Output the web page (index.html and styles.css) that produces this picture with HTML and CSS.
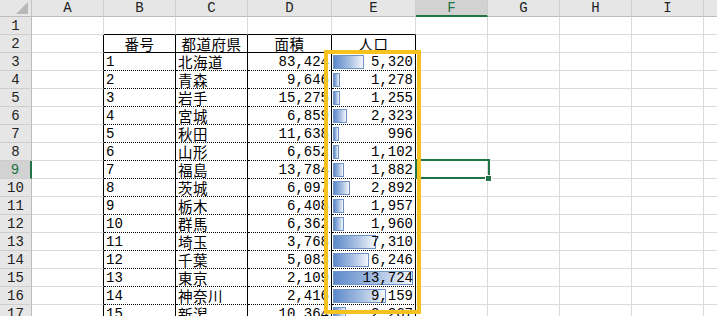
FILE: index.html
```html
<!DOCTYPE html>
<html lang="ja">
<head>
<meta charset="utf-8">
<title>Sheet</title>
<link rel="stylesheet" href="styles.css">
</head>
<body>
<div class="sheet">
  <div class="row colhead">
    <div class="corner"><svg class="tri" width="12" height="12" viewBox="0 0 12 12"><polygon points="12,0 12,12 0,12" fill="#b8b8b8"/></svg></div>
    <div class="ch">A</div><div class="ch">B</div><div class="ch">C</div><div class="ch w84">D</div><div class="ch w84">E</div><div class="ch sel">F</div><div class="ch">G</div><div class="ch">H</div><div class="ch">I</div><div class="ch">J</div>
  </div>
  <div class="row"><div class="rh">1</div><div class="c"></div><div class="c top"></div><div class="c top"></div><div class="c w84 top"></div><div class="c w84 top"></div><div class="c"></div><div class="c"></div><div class="c"></div><div class="c"></div><div class="c"></div></div>
  <div class="row"><div class="rh">2</div><div class="c edge"></div><div class="c hd">番号</div><div class="c hd">都道府県</div><div class="c w84 hd">面積</div><div class="c w84 hd">人口</div><div class="c"></div><div class="c"></div><div class="c"></div><div class="c"></div><div class="c"></div></div>

  <div class="row"><div class="rh">3</div><div class="c edge"></div><div class="c t">1</div><div class="c t jp">北海道</div><div class="c t w84 num">83,424</div><div class="c t w84 e"><span class="bar" style="width:31px"></span><span class="v">5,320</span></div><div class="c"></div><div class="c"></div><div class="c"></div><div class="c"></div><div class="c"></div></div>
  <div class="row"><div class="rh">4</div><div class="c edge"></div><div class="c t">2</div><div class="c t jp">青森</div><div class="c t w84 num">9,646</div><div class="c t w84 e"><span class="bar" style="width:7.4px"></span><span class="v">1,278</span></div><div class="c"></div><div class="c"></div><div class="c"></div><div class="c"></div><div class="c"></div></div>
  <div class="row"><div class="rh">5</div><div class="c edge"></div><div class="c t">3</div><div class="c t jp">岩手</div><div class="c t w84 num">15,275</div><div class="c t w84 e"><span class="bar" style="width:7.3px"></span><span class="v">1,255</span></div><div class="c"></div><div class="c"></div><div class="c"></div><div class="c"></div><div class="c"></div></div>
  <div class="row"><div class="rh">6</div><div class="c edge"></div><div class="c t">4</div><div class="c t jp">宮城</div><div class="c t w84 num">6,859</div><div class="c t w84 e"><span class="bar" style="width:13.5px"></span><span class="v">2,323</span></div><div class="c"></div><div class="c"></div><div class="c"></div><div class="c"></div><div class="c"></div></div>
  <div class="row"><div class="rh">7</div><div class="c edge"></div><div class="c t">5</div><div class="c t jp">秋田</div><div class="c t w84 num">11,638</div><div class="c t w84 e"><span class="bar" style="width:5.8px"></span><span class="v">996</span></div><div class="c"></div><div class="c"></div><div class="c"></div><div class="c"></div><div class="c"></div></div>
  <div class="row"><div class="rh">8</div><div class="c edge"></div><div class="c t">6</div><div class="c t jp">山形</div><div class="c t w84 num">6,652</div><div class="c t w84 e"><span class="bar" style="width:6.4px"></span><span class="v">1,102</span></div><div class="c"></div><div class="c"></div><div class="c"></div><div class="c"></div><div class="c"></div></div>
  <div class="row"><div class="rh rsel">9</div><div class="c edge"></div><div class="c t">7</div><div class="c t jp">福島</div><div class="c t w84 num">13,784</div><div class="c t w84 e"><span class="bar" style="width:11px"></span><span class="v">1,882</span></div><div class="c"></div><div class="c"></div><div class="c"></div><div class="c"></div><div class="c"></div></div>
  <div class="row"><div class="rh">10</div><div class="c edge"></div><div class="c t">8</div><div class="c t jp">茨城</div><div class="c t w84 num">6,097</div><div class="c t w84 e"><span class="bar" style="width:16.9px"></span><span class="v">2,892</span></div><div class="c"></div><div class="c"></div><div class="c"></div><div class="c"></div><div class="c"></div></div>
  <div class="row"><div class="rh">11</div><div class="c edge"></div><div class="c t">9</div><div class="c t jp">栃木</div><div class="c t w84 num">6,408</div><div class="c t w84 e"><span class="bar" style="width:11.4px"></span><span class="v">1,957</span></div><div class="c"></div><div class="c"></div><div class="c"></div><div class="c"></div><div class="c"></div></div>
  <div class="row"><div class="rh">12</div><div class="c edge"></div><div class="c t">10</div><div class="c t jp">群馬</div><div class="c t w84 num">6,362</div><div class="c t w84 e"><span class="bar" style="width:11.4px"></span><span class="v">1,960</span></div><div class="c"></div><div class="c"></div><div class="c"></div><div class="c"></div><div class="c"></div></div>
  <div class="row"><div class="rh">13</div><div class="c edge"></div><div class="c t">11</div><div class="c t jp">埼玉</div><div class="c t w84 num">3,768</div><div class="c t w84 e"><span class="bar" style="width:42.6px"></span><span class="v">7,310</span></div><div class="c"></div><div class="c"></div><div class="c"></div><div class="c"></div><div class="c"></div></div>
  <div class="row"><div class="rh">14</div><div class="c edge"></div><div class="c t">12</div><div class="c t jp">千葉</div><div class="c t w84 num">5,083</div><div class="c t w84 e"><span class="bar" style="width:36.4px"></span><span class="v">6,246</span></div><div class="c"></div><div class="c"></div><div class="c"></div><div class="c"></div><div class="c"></div></div>
  <div class="row"><div class="rh">15</div><div class="c edge"></div><div class="c t">13</div><div class="c t jp">東京</div><div class="c t w84 num">2,109</div><div class="c t w84 e"><span class="bar" style="width:80px"></span><span class="v">13,724</span></div><div class="c"></div><div class="c"></div><div class="c"></div><div class="c"></div><div class="c"></div></div>
  <div class="row"><div class="rh">16</div><div class="c edge"></div><div class="c t">14</div><div class="c t jp">神奈川</div><div class="c t w84 num">2,416</div><div class="c t w84 e"><span class="bar" style="width:53.4px"></span><span class="v">9,159</span></div><div class="c"></div><div class="c"></div><div class="c"></div><div class="c"></div><div class="c"></div></div>
  <div class="row"><div class="rh">17</div><div class="c edge"></div><div class="c t">15</div><div class="c t jp">新潟</div><div class="c t w84 num">10,364</div><div class="c t w84 e"><span class="bar" style="width:13.2px"></span><span class="v">2,267</span></div><div class="c"></div><div class="c"></div><div class="c"></div><div class="c"></div><div class="c"></div></div>

  <div class="selbox"></div>
  <div class="handle"></div>
  <div class="hl"></div>
</div>
</body>
</html>
```
FILE: styles.css
```css
html, body {
  margin: 0;
  padding: 0;
  background: #ffffff;
}
body {
  width: 717px;
  height: 316px;
  overflow: hidden;
}
.sheet {
  position: relative;
  width: 717px;
  height: 316px;
  overflow: hidden;
  font-family: "Liberation Mono", "Noto Sans CJK JP", monospace;
  color: #000;
}
.row {
  display: flex;
  height: 18px;
}
.colhead {
  height: 17px;
}
.corner {
  flex: none;
  width: 32px;
  height: 17px;
  box-sizing: border-box;
  background: #e6e6e6;
  border-right: 1px solid #c4c4c4;
  border-bottom: 1px solid #bcbcbc;
  display: flex;
  justify-content: flex-end;
  align-items: flex-end;
  padding: 0 3px 2px 0;
}
.tri {
  display: block;
}
.ch {
  flex: none;
  width: 72px;
  height: 17px;
  box-sizing: border-box;
  background: #e6e6e6;
  border-right: 1px solid #cdcdcd;
  border-bottom: 1px solid #bcbcbc;
  text-align: center;
  font-size: 14px;
  line-height: 17px;
  color: #222;
}
.ch.w84, .c.w84 {
  width: 84px;
}
.ch.sel {
  background: #d2d2d2;
  color: #217346;
  border-bottom: 2px solid #217346;
  line-height: 16px;
}
.rh {
  flex: none;
  width: 32px;
  height: 18px;
  box-sizing: border-box;
  background: #e6e6e6;
  border-right: 1px solid #bcbcbc;
  border-bottom: 1px solid #cdcdcd;
  text-align: center;
  font-size: 14px;
  line-height: 19px;
  color: #222;
}
.rh.rsel {
  background: #d2d2d2;
  color: #217346;
  border-right: 2px solid #217346;
}
.c {
  flex: none;
  width: 72px;
  height: 18px;
  box-sizing: border-box;
  border-right: 1px solid #dadada;
  border-bottom: 1px solid #dadada;
  padding: 0 2px;
  font-size: 14px;
  line-height: 19px;
  white-space: nowrap;
}
.c.top {
  border-bottom: 1px solid #000;
}
.c.edge {
  border-right: 1px solid #000;
}
.c.hd {
  border-right: 1px solid #000;
  border-bottom: 1px solid #000;
  text-align: center;
  font-family: "Noto Sans CJK JP", sans-serif;
  font-size: 14.5px;
  line-height: 17px;
  letter-spacing: 0.5px;
}
.c.t {
  border-right: 1px solid #000;
  border-bottom: 1px dotted #000;
}
.c.jp {
  font-family: "Noto Sans CJK JP", sans-serif;
  font-size: 14.5px;
  line-height: 17px;
  letter-spacing: 0.5px;
}
.c.num {
  text-align: right;
}
.c.e {
  display: grid;
  grid-template-columns: 1fr;
  grid-template-rows: 17px;
  padding: 0 2px 0 1px;
}
.bar {
  grid-area: 1 / 1;
  justify-self: start;
  align-self: start;
  margin-top: 2px;
  height: 14px;
  box-sizing: border-box;
  border: 1px solid #6f92c8;
  background: linear-gradient(to right, #5d89c9 0%, #a9c0e2 55%, #f4f7fc 100%);
}
.v {
  grid-area: 1 / 1;
  justify-self: end;
  position: relative;
}
.selbox {
  position: absolute;
  left: 415px;
  top: 159px;
  width: 75px;
  height: 20px;
  box-sizing: border-box;
  border: 2px solid #217346;
}
.handle {
  position: absolute;
  left: 486px;
  top: 176px;
  width: 5px;
  height: 5px;
  background: #217346;
  box-shadow: 0 0 0 1px #ffffff;
}
.hl {
  position: absolute;
  left: 324px;
  top: 50px;
  width: 97px;
  height: 264px;
  box-sizing: border-box;
  border: 4px solid #f5c21f;
}
```
